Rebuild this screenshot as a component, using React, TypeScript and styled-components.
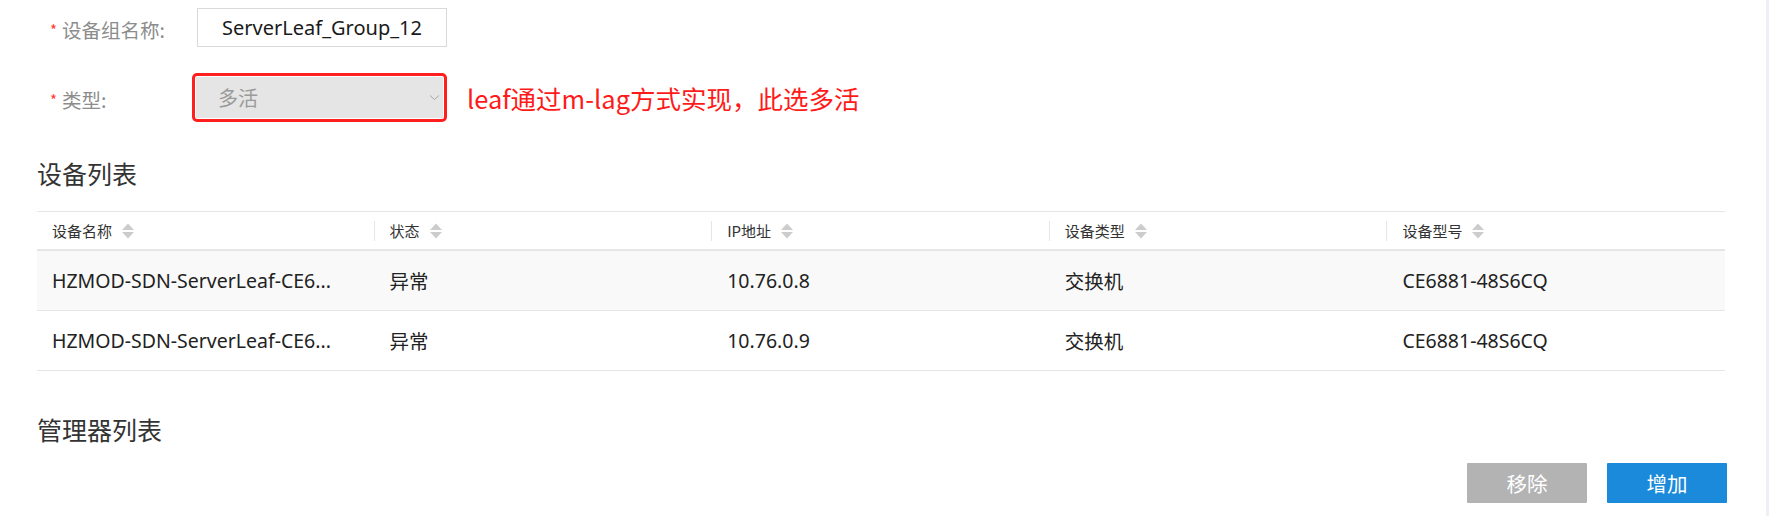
import React from "react";
import styled, { createGlobalStyle } from "styled-components";

const Global = createGlobalStyle`
  html, body { margin: 0; padding: 0; background: #fff; }
  body { font-family: "Noto Sans", "Noto Sans CJK SC", sans-serif; }
  * { box-sizing: border-box; }
`;

const Shell = styled.div`
  display: flex;
  width: 1769px;
  height: 516px;
  overflow: hidden;
  background: #fff;
`;

const Content = styled.div`
  flex: 1;
  padding: 8px 41px 0 37px;
  display: flex;
  flex-direction: column;
`;

const ScrollTrack = styled.div`
  width: 3px;
  background: #efeff4;
`;

const Form = styled.div`
  display: flex;
  flex-direction: column;
  gap: 26px;
  padding-left: 13px;
`;

const FormRow = styled.div`
  display: flex;
  align-items: center;
`;

const Label = styled.div`
  width: 147px;
  display: flex;
  align-items: center;
  font-family: "Noto Sans CJK SC", sans-serif;
  font-size: 19.5px;
  color: #8c8c8c;
  padding-top: 3px;
`;

const Star = styled.span`
  color: #ff3b30;
  font-size: 15px;
  margin-right: 5px;
`;

const TextInput = styled.div`
  width: 250px;
  height: 39px;
  border: 1px solid #d9d9d9;
  display: flex;
  align-items: center;
  justify-content: center;
  font-family: "Noto Sans", sans-serif;
  font-size: 20px;
  color: #1a1a1a;
`;

const Highlight = styled.div`
  border: 3px solid #ff1f1f;
  border-radius: 5px;
  padding: 1px;
  margin-left: -5px;
`;

const SelectBox = styled.div`
  width: 247px;
  height: 41px;
  background: #e5e5e5;
  display: flex;
  align-items: center;
  justify-content: space-between;
  padding: 0 3px 0 22px;
  font-family: "Noto Sans CJK SC", sans-serif;
  font-size: 20px;
  color: #9a9a9a;
`;

const Note = styled.div`
  margin-left: 20px;
  color: #ff1a1a;
  font-family: "Noto Sans CJK SC", sans-serif;
  font-size: 25.5px;
`;

const SectionTitle = styled.div<{ $top: number }>`
  margin-top: ${(p) => p.$top}px;
  font-family: "Noto Sans CJK SC", sans-serif;
  font-size: 25px;
  line-height: 28px;
  color: #333;
`;

const Table = styled.div`
  margin-top: 24px;
  border-top: 1px solid #e6e6e6;
`;

const Row = styled.div<{ $head?: boolean; $shade?: boolean }>`
  display: grid;
  grid-template-columns: repeat(5, 1fr);
  height: ${(p) => (p.$head ? 39 : 60)}px;
  align-items: center;
  background: ${(p) => (p.$shade ? "#f9f9f9" : "#fff")};
  border-bottom: ${(p) => (p.$head ? 2 : 1)}px solid #e6e6e6;
`;

const HeadCell = styled.div<{ $sep?: boolean }>`
  display: flex;
  align-items: center;
  gap: 10px;
  height: 20px;
  padding: 0 15px;
  border-left: ${(p) => (p.$sep ? "1px solid #e6e6e6" : "1px solid transparent")};
  font-family: "Noto Sans CJK SC", sans-serif;
  font-size: 15px;
  color: #333;
  margin-left: -1px;
`;

const Cell = styled.div`
  padding: 0 15px;
  font-family: "Noto Sans", "Noto Sans CJK SC", sans-serif;
  font-size: 19.5px;
  color: #222;
  white-space: nowrap;
  overflow: hidden;
`;

const ButtonBar = styled.div`
  margin-top: 20px;
  display: flex;
  justify-content: flex-end;
  gap: 20px;
  margin-right: -2px;
`;

const Button = styled.button<{ $primary?: boolean }>`
  width: 120px;
  height: 40px;
  border: none;
  border-radius: 1px;
  background: ${(p) => (p.$primary ? "#1b8ada" : "#b3b3b3")};
  color: #fff;
  font-family: "Noto Sans CJK SC", sans-serif;
  font-size: 20.5px;
  padding: 0;
`;

const SortIcon = () => (
  <svg width="12" height="16" viewBox="0 0 12 16">
    <polygon points="0,7 6,0.5 12,7" fill="#cccccc" />
    <polygon points="0,9 6,15.5 12,9" fill="#cccccc" />
  </svg>
);

const Chevron = () => (
  <svg width="11" height="7" viewBox="0 0 11 7">
    <polyline points="1,1.5 5.5,5.5 10,1.5" fill="none" stroke="#a8a8a8" strokeWidth="1" />
  </svg>
);

const headers = ["设备名称", "状态", "IP地址", "设备类型", "设备型号"];
const rows = [
  ["HZMOD-SDN-ServerLeaf-CE6...", "异常", "10.76.0.8", "交换机", "CE6881-48S6CQ"],
  ["HZMOD-SDN-ServerLeaf-CE6...", "异常", "10.76.0.9", "交换机", "CE6881-48S6CQ"],
];

export default function App() {
  return (
    <>
      <Global />
      <Shell>
        <Content>
          <Form>
            <FormRow>
              <Label>
                <Star>*</Star>设备组名称:
              </Label>
              <TextInput>ServerLeaf_Group_12</TextInput>
            </FormRow>
            <FormRow>
              <Label>
                <Star>*</Star>类型:
              </Label>
              <Highlight>
                <SelectBox>
                  <span>多活</span>
                  <Chevron />
                </SelectBox>
              </Highlight>
              <Note>leaf通过m-lag方式实现，此选多活</Note>
            </FormRow>
          </Form>
          <SectionTitle $top={37}>设备列表</SectionTitle>
          <Table>
            <Row $head>
              {headers.map((h, i) => (
                <HeadCell key={h} $sep={i > 0}>
                  {h}
                  <SortIcon />
                </HeadCell>
              ))}
            </Row>
            {rows.map((r, i) => (
              <Row key={i} $shade={i === 0}>
                {r.map((c, j) => (
                  <Cell key={j}>{c}</Cell>
                ))}
              </Row>
            ))}
          </Table>
          <SectionTitle $top={44}>管理器列表</SectionTitle>
          <ButtonBar>
            <Button>移除</Button>
            <Button $primary>增加</Button>
          </ButtonBar>
        </Content>
        <ScrollTrack />
      </Shell>
    </>
  );
}
